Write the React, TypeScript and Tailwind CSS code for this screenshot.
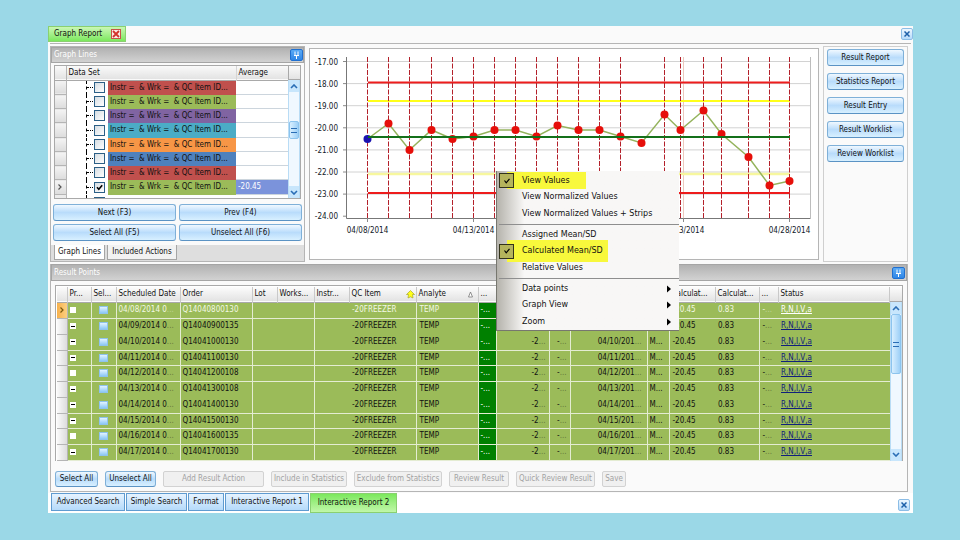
import React from "react";
import clsx from "clsx";

const DATA_SETS = [
  { color: "bg-[#c0504d]", checked: false, average: "" },
  { color: "bg-[#9bbb59]", checked: false, average: "" },
  { color: "bg-[#8064a2]", checked: false, average: "" },
  { color: "bg-[#4bacc6]", checked: false, average: "" },
  { color: "bg-[#f79646]", checked: false, average: "" },
  { color: "bg-[#4f81bd]", checked: false, average: "" },
  { color: "bg-[#c0504d]", checked: false, average: "" },
  { color: "bg-[#9bbb59]", checked: true, average: "-20.45" },
];

const SIDE_ACTIONS = ["Result Report", "Statistics Report", "Result Entry", "Result Worklist", "Review Worklist"];

const RESULTS = [
  { day: "08", order: "Q14040800130", measured: false },
  { day: "09", order: "Q14040900135", measured: false },
  { day: "10", order: "Q14041000130", measured: true },
  { day: "11", order: "Q14041100130", measured: true },
  { day: "12", order: "Q14041200108", measured: true },
  { day: "13", order: "Q14041300108", measured: true },
  { day: "14", order: "Q14041400130", measured: true },
  { day: "15", order: "Q14041500130", measured: true },
  { day: "16", order: "Q14041600135", measured: true },
  { day: "17", order: "Q14041700130", measured: true },
];

const COLUMNS = [
  { label: "", width: "w-[10px]" },
  { label: "Pr...", width: "w-[24px]" },
  { label: "Sel...", width: "w-[25px]" },
  { label: "Scheduled Date", width: "w-[64px]" },
  { label: "Order", width: "w-[72px]" },
  { label: "Lot", width: "w-[25px]" },
  { label: "Works...", width: "w-[37px]" },
  { label: "Instr...", width: "w-[35px]" },
  { label: "QC Item", width: "w-[67px]" },
  { label: "Analyte", width: "w-[62px]" },
  { label: "...", width: "w-[18px]" },
  { label: "", width: "w-[53px]" },
  { label: "", width: "w-[21px]" },
  { label: "", width: "w-[77px]" },
  { label: "", width: "w-[22px]" },
  { label: "Calculat...", width: "w-[46px]" },
  { label: "Calculat...", width: "w-[44px]" },
  { label: "...", width: "w-[19px]" },
  { label: "Status", width: "" },
];

const FOOTER_ACTIONS = [
  { label: "Select All", width: "w-[43px]", enabled: true },
  { label: "Unselect All", width: "w-[51px]", enabled: true },
  { label: "Add Result Action", width: "w-[101px]", enabled: false },
  { label: "Include in Statistics", width: "w-[76px]", enabled: false },
  { label: "Exclude from Statistics", width: "w-[88px]", enabled: false },
  { label: "Review Result", width: "w-[60px]", enabled: false },
  { label: "Quick Review Result", width: "w-[79px]", enabled: false },
  { label: "Save", width: "w-[24px]", enabled: false },
];

const BOTTOM_TABS = [
  { label: "Advanced Search", width: "w-[74px]" },
  { label: "Simple Search", width: "w-[61px]" },
  { label: "Format", width: "w-[36px]" },
  { label: "Interactive Report 1", width: "w-[84px]" },
];

const MENU_GROUPS = [
  [
    { label: "View Values", checked: true, arrow: false },
    { label: "View Normalized Values", checked: false, arrow: false },
    { label: "View Normalized Values + Strips", checked: false, arrow: false },
  ],
  [
    { label: "Assigned Mean/SD", checked: false, arrow: false },
    { label: "Calculated Mean/SD", checked: true, arrow: false },
    { label: "Relative Values", checked: false, arrow: false },
  ],
  [
    { label: "Data points", checked: false, arrow: true },
    { label: "Graph View", checked: false, arrow: true },
    { label: "Zoom", checked: false, arrow: true },
  ],
];

// chart points in svg units
const POINTS = [
  [57.5, 90], [78.5, 74.5], [99.5, 101], [121.5, 81], [142.5, 90], [163.5, 87.5], [184.5, 81],
  [205.5, 81], [226.5, 87.5], [247.5, 76.5], [268.5, 81], [289.5, 81], [310.5, 87.5], [331.5, 94],
  [354.5, 65.5], [370.5, 81], [393.5, 61.5], [411.5, 85], [438.5, 108], [459.5, 136.5], [479.5, 132],
];

const DATES = [
  { x: 57.5, label: "04/08/2014" },
  { x: 163.5, label: "04/13/2014" },
  { x: 373.5, label: "04/23/2014" },
  { x: 479.5, label: "04/28/2014" },
];

interface BlueButtonProps {
  children: React.ReactNode;
  className?: string;
}

function BlueButton({ children, className }: BlueButtonProps) {
  return (
    <button
      type="button"
      className={clsx(
        "flex items-center justify-center whitespace-nowrap rounded-[3px] border border-[#7fb0d8] border-b-[#5b93c4] bg-linear-to-b from-[#f0f8ff] via-[#b9dcfb] to-[#d8f0ff]",
        className
      )}
    >
      {children}
    </button>
  );
}

function CloseButton({ className }: { className?: string }) {
  return (
    <button
      type="button"
      aria-label="Close"
      className={clsx(
        "flex h-3 w-3 items-center justify-center rounded-[2px] border border-[#8cbde6] bg-linear-to-b from-[#eef7ff] to-[#b5dafa]",
        className
      )}
    >
      <svg viewBox="0 0 6 6" className="h-1.5 w-1.5">
        <path d="M.5 .5L5.5 5.5M5.5 .5L.5 5.5" stroke="#1d5fa8" strokeWidth="1.5" />
      </svg>
    </button>
  );
}

function PanelHeader({ title, className }: { title: string; className?: string }) {
  return (
    <div
      className={clsx(
        "flex items-center justify-between border border-[#a5a5a5] bg-linear-to-b from-[#b2b2b2] to-[#d2d2d2] pl-0.5 text-white",
        className
      )}
    >
      <h2>{title}</h2>
      <button
        type="button"
        aria-label={`Pin ${title}`}
        className="flex h-3 w-[13px] items-center justify-center rounded-[2px] border border-[#1f6fd0] bg-linear-to-b from-[#5aaaf5] to-[#2f86e6]"
      >
        <svg viewBox="0 0 7 8" className="h-2 w-[7px]" fill="none" stroke="#fff">
          <path d="M2 .5V4M5 .5V4M1 4.5H6M3.5 4.5V8" />
        </svg>
      </button>
    </div>
  );
}

function RowMarker() {
  return (
    <svg viewBox="0 0 6 8" className="mx-auto block h-2 w-1.5" fill="none" stroke="currentColor" strokeWidth="1.2">
      <path d="M1.5 1.5L4 4L1.5 6.5" />
    </svg>
  );
}

function ScrollBar({ thumb }: { thumb: "small" | "large" }) {
  return (
    <div className="flex w-3 shrink-0 flex-col border-x border-[#b9dcf5] bg-[#f0f8ff]">
      <div className="flex h-3 items-center justify-center bg-[#c8e6fc]">
        <svg viewBox="0 0 8 5" className="h-[5px] w-2" fill="none" stroke="#2a6db5" strokeWidth="1.6">
          <path d="M1 4L4 1L7 4" />
        </svg>
      </div>
      {thumb === "small" && <div className="grow-[5]" />}
      <div
        className={clsx(
          "flex flex-col items-center justify-center gap-px rounded-[2px] border border-[#8cc4ee] bg-linear-to-r from-[#d8efff] to-[#9dd0f7]",
          thumb === "small" ? "h-[18px]" : "h-[60px]"
        )}
      >
        <span className="h-px w-1.5 bg-[#2a6db5]" />
        <span className="h-px w-1.5" />
        <span className="h-px w-1.5 bg-[#2a6db5]" />
      </div>
      <div className="grow-[8]" />
      <div className="flex h-3 items-center justify-center bg-[#c8e6fc]">
        <svg viewBox="0 0 8 5" className="h-[5px] w-2" fill="none" stroke="#2a6db5" strokeWidth="1.6">
          <path d="M1 1L4 4L7 1" />
        </svg>
      </div>
    </div>
  );
}

function GraphLinesPanel() {
  return (
    <section className="flex w-[255px] shrink-0 flex-col border border-[#b5b5b5] bg-[#fafafa]">
      <PanelHeader title="Graph Lines" className="h-4" />
      <div className="mx-[3px] mt-0.5 flex h-[134px] overflow-hidden border border-[#a9a9a9] bg-white">
        <table className="h-fit flex-1 table-fixed border-collapse text-left">
          <colgroup>
            <col className="w-[11px]" />
            <col className="w-[42px]" />
            <col className="w-[128px]" />
            <col />
          </colgroup>
          <thead>
            <tr className="h-[14px] border-b border-[#a9a9a9] bg-linear-to-b from-[#fafafa] to-[#e3e3e3]">
              <th className="border-r border-[#b5b5b5]" />
              <th colSpan={2} className="border-r border-[#d5d5d5] p-0 pl-0.5 font-normal">Data Set</th>
              <th className="p-0 pl-0.5 font-normal">Average</th>
            </tr>
          </thead>
          <tbody>
            {DATA_SETS.map((row, i) => (
              <tr key={i} className="h-[14px] nth-[4n]:h-[15px]">
                <td className="border-r border-b border-[#b5b5b5] bg-linear-to-b from-[#f4f4f4] to-[#dcdcdc] p-0 text-[#555]">
                  {row.checked && <RowMarker />}
                </td>
                <td className="p-0">
                  <div className="flex h-[14px] items-center pl-[19px]">
                    <div className="flex h-full w-2 items-center border-l border-dashed border-black">
                      <span className="w-1.5 border-t border-dotted border-black" />
                    </div>
                    <input
                      type="checkbox"
                      aria-label={`Data set ${i + 1}`}
                      defaultChecked={row.checked}
                      className="peer h-[11px] w-[11px] appearance-none border border-[#2b5f86] bg-linear-to-br from-[#d6dde2] to-white"
                    />
                    {/* tick sits on top of the box */}
                    <svg viewBox="0 0 11 11" className="pointer-events-none -ml-[11px] hidden h-[11px] w-[11px] peer-checked:block">
                      <path d="M3 5.2L4.8 7.2L8.2 3.2" fill="none" stroke="#000" strokeWidth="1.6" />
                    </svg>
                  </div>
                </td>
                <td className={clsx("whitespace-nowrap p-0 pl-0.5", row.color)}>
                  Instr =&nbsp; &amp; Wrk =&nbsp; &amp; QC Item ID...
                </td>
                <td className={clsx("border-b border-[#ccd5dd] p-0 pl-0.5", row.average && "bg-[#7b93db] text-white")}>
                  {row.average}
                </td>
              </tr>
            ))}
            <tr className="h-[14px]">
              <td className="border-r border-[#b5b5b5] bg-[#ececec]" />
              <td className="p-0 align-top">
                <div className="ml-[19px] h-[14px] border-l border-dashed border-black pl-[7px] pt-0.5">
                  <div className="h-[11px] w-[11px] border border-[#2b5f86]" />
                </div>
              </td>
              <td />
              <td />
            </tr>
          </tbody>
        </table>
        <div className="flex flex-col">
          <div className="h-[14px] shrink-0 border-b border-l border-[#a9a9a9] bg-linear-to-b from-[#fafafa] to-[#e3e3e3]" />
          <div className="flex flex-1">
            <ScrollBar thumb="small" />
          </div>
        </div>
      </div>
      <div className="mx-0.5 mt-[5px] grid grid-cols-2 gap-[3px]">
        <BlueButton className="h-[17px]">Next (F3)</BlueButton>
        <BlueButton className="h-[17px]">Prev (F4)</BlueButton>
        <BlueButton className="h-[17px]">Select All (F5)</BlueButton>
        <BlueButton className="h-[17px]">Unselect All (F6)</BlueButton>
      </div>
      <div className="mt-1 flex h-4 gap-0.5 bg-[#dedede] pl-[3px]">
        <button type="button" className="h-[15px] w-[51px] whitespace-nowrap border border-t-0 border-[#a5a5a5] bg-white">Graph Lines</button>
        <button type="button" className="h-[15px] w-[70px] whitespace-nowrap border border-t-0 border-[#a5a5a5] bg-[#f2f2f2]">Included Actions</button>
      </div>
    </section>
  );
}

function LeveyChart() {
  return (
    <svg viewBox="0 0 508 210" className="block w-full" fontSize="8" fill="#111827">
      {[0, 1, 2, 3, 4, 5, 6, 7].map((i) => (
        <g key={i}>
          {i < 7 && <path d={`M37 ${12.5 + i * 22.1}H501`} stroke="#d2d2d2" />}
          <path d={`M33 ${12.5 + i * 22.1}H37`} stroke="#8a8a8a" />
          <text x="28" y={15.5 + i * 22.1} textAnchor="end">{`-${17 + i}.00`}</text>
        </g>
      ))}
      <path d="M36.5 8V169.5H500.5" fill="none" stroke="#777" />
      <path d="M500.5 8V169" stroke="#bdbdbd" />
      <path d="M373.5 8V169" stroke="#ecc9bd" />
      {DATES.map((d) => (
        <g key={d.label}>
          <path d={`M${d.x} 169V173`} stroke="#8a8a8a" />
          <text x={d.x} y="184" textAnchor="middle">{d.label}</text>
        </g>
      ))}
      <path d="M58 125H480" stroke="#f7f79e" strokeWidth="2.5" />
      <path d="M58 52H480" stroke="#ffff1a" strokeWidth="2" />
      <path d="M58 33.5H480M58 144H480" stroke="#ee1c1c" strokeWidth="2" />
      {POINTS.map(([x], i) =>
        i === 13 ? null : <path key={x} d={`M${x} 8V169`} stroke="#b3202a" strokeDasharray="5 1.5" />
      )}
      <polyline points={POINTS.map((p) => p.join(",")).join(" ")} fill="none" stroke="#94b35c" strokeWidth="1.5" />
      {POINTS.map(([x, y], i) => (
        <circle key={x} cx={x} cy={y} r="4" fill={i === 0 ? "#1a12b0" : "#e60f0a"} />
      ))}
      <path d="M58 88H480" stroke="#14701a" strokeWidth="2" />
    </svg>
  );
}

function ContextMenu() {
  return (
    <div
      role="menu"
      className="absolute left-[186px] top-[122px] z-10 w-[183px] border-b border-l border-[#77776f] bg-linear-to-r from-[#b5b3ac] via-[#f8f7f6] via-15% to-[#f8f7f6] pl-0.5 pt-px font-['DejaVu_Sans',sans-serif]"
    >
      {MENU_GROUPS.map((group, g) => (
        <div key={g} className={clsx(g > 0 && "mt-0.5 border-t border-[#8e8e8e] pt-px")}>
          {group.map((item) => (
            <button
              key={item.label}
              type="button"
              role="menuitem"
              className="relative flex h-[17px] w-full items-center nth-[2]:h-4"
            >
              {item.checked && (
                <span
                  className={clsx(
                    "absolute left-2 bg-[#f8f83c]",
                    g === 0 ? "inset-y-0 w-[79px]" : "-inset-y-[3px] w-[101px]"
                  )}
                />
              )}
              <span
                className={clsx(
                  "relative flex h-[15px] w-[15px] items-center justify-center",
                  item.checked && "border border-[#33331a] bg-[#b5b45c]"
                )}
              >
                {item.checked && (
                  <svg viewBox="0 0 8 8" className="h-2 w-2" fill="none" stroke="#000" strokeWidth="1.2">
                    <path d="M1.5 3.5L3.2 5.8L6.5 1.8" />
                  </svg>
                )}
              </span>
              <span className="relative ml-2 whitespace-nowrap">{item.label}</span>
              {item.arrow && (
                <svg viewBox="0 0 4 8" className="ml-auto mr-2 h-2 w-1">
                  <path d="M0 0.5L4 4L0 7.5Z" />
                </svg>
              )}
            </button>
          ))}
        </div>
      ))}
    </div>
  );
}

function Dots() {
  return <span className="opacity-40">...</span>;
}

interface ResultRowProps {
  day: string;
  order: string;
  measured: boolean;
  index: number;
}

function ResultRow({ day, order, measured, index }: ResultRowProps) {
  const selected = index === 0;
  const v = "border-r border-[#e4ecd2]";
  return (
    <tr
      className={clsx(
        "h-4 bg-[#9bbb59] nth-[4n]:h-[15px]",
        index !== 1 && index !== 5 && "border-b border-[#e4ecd2]",
        selected && "text-[#f3f8e4]"
      )}
    >
      <td
        className={clsx(
          "border-r border-b border-[#b5b5b5] p-0 text-[#7a5a10]",
          selected ? "bg-linear-to-r from-[#f7b04a] to-[#fbd080]" : "bg-linear-to-r from-[#fafafa] to-[#dcdcdc]"
        )}
      >
        {selected && <RowMarker />}
      </td>
      <td className={v}>
        <div className="ml-0.5 flex h-1.5 w-1.5 items-center justify-center bg-white">
          {index % 4 !== 0 && <span className="h-px w-1 bg-black" />}
        </div>
      </td>
      <td className={v}>
        <input
          type="checkbox"
          aria-label={`Select ${order}`}
          className="mx-auto block h-2 w-[9px] appearance-none border border-[#8fc3ec] bg-linear-to-b from-[#e2f3ff] to-[#8cc8f5]"
        />
      </td>
      <td className={clsx(v, "pl-0.5")}>04/{day}/2014 0<Dots /></td>
      <td className={clsx(v, "pl-0.5")}>{order}</td>
      <td />
      <td className={v} />
      <td />
      <td className={clsx(v, "pl-[3px]")}>-20FREEZER</td>
      <td className={clsx(v, "pl-[3px]")}>TEMP</td>
      <td className={clsx(v, "bg-[#008000] pl-0.5 text-white")}>-...</td>
      <td className={clsx(v, "pr-[3px] text-right")}>{measured && <>-2<Dots /></>}</td>
      <td className={clsx(v, "pr-[3px] text-right")}>{measured && <>-<Dots /></>}</td>
      <td className={clsx(v, "pr-[5px] text-right")}>{measured && <>04/{day}/201<Dots /></>}</td>
      <td className={clsx(v, "pl-0.5")}>{measured && "M..."}</td>
      <td className="pl-[3px]">-20.45</td>
      <td className={clsx(v, "pl-[3px]")}>0.83</td>
      <td className="pl-[3px]">-<Dots /></td>
      <td className="pl-[3px]">
        <a href="#status" className={clsx("underline", selected ? "text-white" : "text-[#10207c]")}>R,N,I,V,a</a>
      </td>
    </tr>
  );
}

function ResultPoints() {
  return (
    <section className="mt-0.5 border-x border-b border-[#b5b5b5] bg-[#fafafa] pb-1">
      <PanelHeader title="Result Points" className="h-[17px] pr-px" />
      <div className="mx-1 mt-1 flex border border-b-0 border-[#a9a9a9] bg-white pl-px pt-px">
        <table className="min-w-0 flex-1 table-fixed border-collapse whitespace-nowrap text-left [&_td]:py-0 [&_td]:leading-none">
          <colgroup>
            {COLUMNS.map((c, i) => (
              <col key={i} className={c.width} />
            ))}
          </colgroup>
          <thead>
            <tr className="h-[15px] border-b border-[#a9a9a9] bg-linear-to-b from-[#fcfcfc] to-[#e3e3e3]">
              {COLUMNS.map((c, i) => (
                <th key={i} className="border-r border-[#c9c9c9] p-0 pl-0.5 font-normal leading-none">
                  <div className="flex items-center justify-between">
                    <span>{c.label}</span>
                    {c.label === "QC Item" && (
                      <svg viewBox="0 0 9 9" className="mr-px h-[9px] w-[9px]">
                        <path d="M4.5 .5L8.5 4.5H6.5L7 8L4.5 6.8L2 8L2.5 4.5H.5Z" fill="#ffff1a" stroke="#a8a82a" strokeWidth=".7" />
                      </svg>
                    )}
                    {c.label === "Analyte" && (
                      <svg viewBox="0 0 7 7" className="mr-1 h-[7px] w-[7px]">
                        <path d="M3.5 1L5.5 6H1.5Z" fill="#fff" stroke="#777" strokeWidth=".8" />
                      </svg>
                    )}
                  </div>
                </th>
              ))}
            </tr>
          </thead>
          <tbody>
            {RESULTS.map((r, i) => (
              <ResultRow key={r.order} {...r} index={i} />
            ))}
          </tbody>
        </table>
        <div className="flex flex-col">
          <div className="h-[15px] border-b border-[#a9a9a9] bg-linear-to-b from-[#fcfcfc] to-[#e3e3e3]" />
          <div className="flex flex-1">
            <ScrollBar thumb="large" />
          </div>
        </div>
      </div>
      <div className="ml-1 mt-2.5 flex gap-[7px]">
        {FOOTER_ACTIONS.map((a) =>
          a.enabled ? (
            <BlueButton key={a.label} className={clsx("h-4", a.width)}>{a.label}</BlueButton>
          ) : (
            <button
              key={a.label}
              type="button"
              disabled
              className={clsx(
                "flex h-4 items-center justify-center whitespace-nowrap rounded-[2px] border border-[#d2d2d2] bg-[#f0f0f0] text-[#a3a3a3]",
                a.width
              )}
            >
              {a.label}
            </button>
          )
        )}
      </div>
    </section>
  );
}

export default function App() {
  return (
    <div className="min-h-screen bg-[#9bd8e7] pb-[27px] pl-12 pr-[47px] pt-[26px] font-['DejaVu_Sans_Condensed','DejaVu_Sans',sans-serif] text-[8px] leading-[10px] text-[#111]">
      <main className="bg-[#fafafa]">
        <div className="flex h-[17px] items-start justify-between">
          <div className="flex h-4 w-[78px] items-center gap-[9px] border border-[#8ad070] bg-linear-to-b from-[#c9f7b4] to-[#7be85c] pl-[5px]">
            <span className="whitespace-nowrap">Graph Report</span>
            <button type="button" aria-label="Close Graph Report" className="flex h-2.5 w-2.5 shrink-0 items-center justify-center border border-[#c8524a] bg-[#fbe9e7]">
              <svg viewBox="0 0 8 8" className="h-2 w-2">
                <path d="M1 1L7 7M7 1L1 7" stroke="#d2322a" strokeWidth="1.8" />
              </svg>
            </button>
          </div>
          <CloseButton className="mt-0.5" />
        </div>

        <div className="mx-0.5 border-t border-[#b5b5b5] pr-[3px] pt-0.5">
          <div className="flex gap-1">
            <GraphLinesPanel />
            <div className="relative mt-0.5 flex-1 self-start border border-[#b5b5b5] bg-white">
              <LeveyChart />
              <ContextMenu />
            </div>
            <div className="flex w-[85px] shrink-0 flex-col gap-[7px] border border-[#cfcfcf] bg-[#fafafa] px-[3px] pt-0.5">
              {SIDE_ACTIONS.map((label) => (
                <BlueButton key={label} className="h-[17px]">{label}</BlueButton>
              ))}
            </div>
          </div>
          <ResultPoints />
        </div>

        <div className="mt-px flex h-5 items-start gap-px bg-white pl-[3px] pr-[3px]">
          {BOTTOM_TABS.map((t) => (
            <button
              key={t.label}
              type="button"
              className={clsx(
                "h-[18px] whitespace-nowrap border border-[#5f9bd0] bg-linear-to-b from-[#e6f3ff] to-[#b5dafa]",
                t.width
              )}
            >
              {t.label}
            </button>
          ))}
          <button type="button" className="h-5 w-[87px] whitespace-nowrap border border-[#8ad070] bg-linear-to-b from-[#7be85c] to-[#c0f7a8]">
            Interactive Report 2
          </button>
          <CloseButton className="ml-auto mt-1.5" />
        </div>
      </main>
    </div>
  );
}
